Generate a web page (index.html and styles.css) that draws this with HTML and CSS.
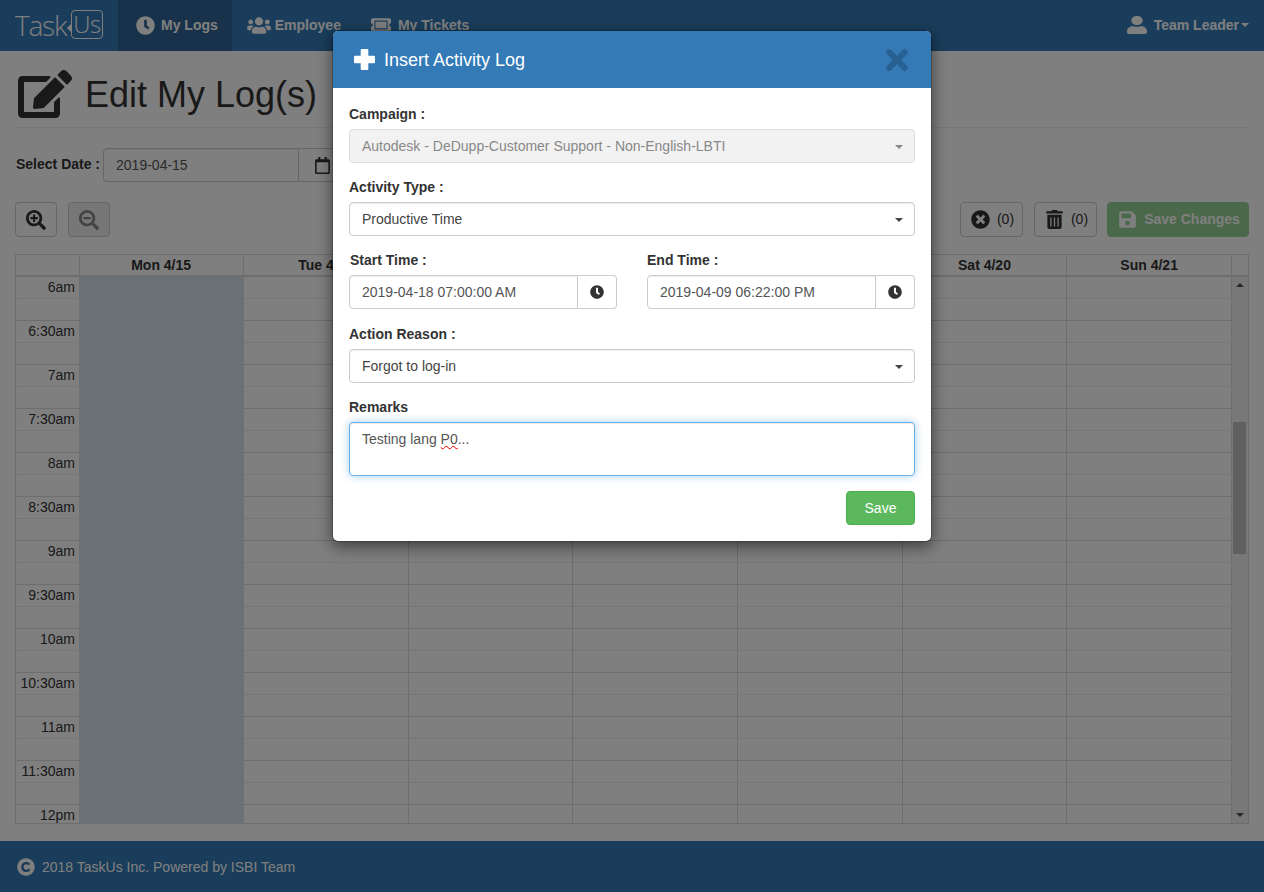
FILE: index.html
```html
<!DOCTYPE html>
<html lang="en">
<head>
  <meta charset="UTF-8">
  <meta name="viewport" content="width=device-width, initial-scale=1.0">
  <link rel="stylesheet" href="styles.css">
  <title>Edit My Log(s)</title>
</head>
<body>

  <svg class="sprite" xmlns="http://www.w3.org/2000/svg">
    <symbol id="i-clock" viewBox="0 0 512 512"><path d="M256,8C119,8,8,119,8,256S119,504,256,504,504,393,504,256,393,8,256,8Zm57.1,350.1L224.9,294c-3.1-2.3-4.9-5.9-4.9-9.7V116c0-6.6,5.4-12,12-12h48c6.6,0,12,5.4,12,12V253.7l63.5,46.2c5.4,3.9,6.5,11.4,2.6,16.8l-28.2,38.8C326.9,360.9,318.5,362,313.1,358.1Z"/></symbol>
    <symbol id="i-users" viewBox="0 0 640 512"><path d="M96 224c35.3 0 64-28.7 64-64s-28.7-64-64-64-64 28.7-64 64 28.7 64 64 64zm448 0c35.3 0 64-28.7 64-64s-28.7-64-64-64-64 28.7-64 64 28.7 64 64 64zm32 32h-64c-17.6 0-33.5 7.1-45.1 18.6 40.3 22.1 68.9 62 75.1 109.4h66c17.7 0 32-14.3 32-32v-32c0-35.3-28.7-64-64-64zm-256 0c61.9 0 112-50.1 112-112S381.9 32 320 32 208 82.1 208 144s50.1 112 112 112zm76.8 32h-8.3c-20.8 10-43.9 16-68.5 16s-47.6-6-68.5-16h-8.3C179.6 288 128 339.6 128 403.2V432c0 26.5 21.5 48 48 48h288c26.5 0 48-21.5 48-48v-28.8c0-63.6-51.6-115.2-115.2-115.2zm-223.7-13.4C161.5 263.1 145.6 256 128 256H64c-35.3 0-64 28.7-64 64v32c0 17.7 14.3 32 32 32h65.9c6.3-47.4 34.9-87.3 75.2-109.4z"/></symbol>
    <symbol id="i-ticket" viewBox="0 0 576 512"><path d="M128 160h320v192H128V160zm400 96c0 26.51 21.49 48 48 48v96c0 26.51-21.49 48-48 48H48c-26.51 0-48-21.49-48-48v-96c26.51 0 48-21.49 48-48s-21.49-48-48-48v-96c0-26.51 21.49-48 48-48h480c26.51 0 48 21.49 48 48v96c-26.51 0-48 21.49-48 48zm-48-104c0-13.255-10.745-24-24-24H120c-13.255 0-24 10.745-24 24v208c0 13.255 10.745 24 24 24h336c13.255 0 24-10.745 24-24V152z"/></symbol>
    <symbol id="i-user" viewBox="0 0 448 512" preserveAspectRatio="none"><path d="M224 256c70.7 0 128-57.3 128-128S294.7 0 224 0 96 57.3 96 128s57.3 128 128 128zm89.6 32h-16.7c-22.2 10.2-46.9 16-72.9 16s-50.6-5.8-72.9-16h-16.7C60.2 288 0 348.2 0 422.4V464c0 26.5 21.5 48 48 48h352c26.5 0 48-21.5 48-48v-41.6c0-74.2-60.2-134.4-134.4-134.4z"/></symbol>
    <symbol id="i-edit" viewBox="0 0 576 512"><path d="M402.6 83.2l90.2 90.2c3.8 3.8 3.8 10 0 13.8L274.4 405.6l-92.8 10.3c-12.4 1.4-22.9-9.1-21.5-21.5l10.3-92.8L388.8 83.2c3.8-3.8 10-3.8 13.8 0zm162-22.9l-48.8-48.8c-15.2-15.2-39.9-15.2-55.2 0l-35.4 35.4c-3.8 3.8-3.8 10 0 13.8l90.2 90.2c3.8 3.8 10 3.8 13.8 0l35.4-35.4c15.2-15.3 15.2-40 0-55.2zM384 346.2V448H64V128h229.8c3.2 0 6.2-1.3 8.5-3.5l40-40c7.6-7.6 2.2-20.5-8.5-20.5H48C21.5 64 0 85.5 0 112v352c0 26.5 21.5 48 48 48h352c26.5 0 48-21.5 48-48V306.2c0-10.7-12.9-16-20.5-8.5l-40 40c-2.2 2.3-3.5 5.3-3.5 8.5z"/></symbol>
    <symbol id="i-calendar" viewBox="0 0 448 512"><path d="M400 64h-48V12c0-6.6-5.4-12-12-12h-40c-6.6 0-12 5.4-12 12v52H160V12c0-6.6-5.4-12-12-12h-40c-6.6 0-12 5.4-12 12v52H48C21.5 64 0 85.5 0 112v352c0 26.5 21.5 48 48 48h352c26.5 0 48-21.5 48-48V112c0-26.5-21.5-48-48-48zm-6 400H54c-3.3 0-6-2.7-6-6V160h352v298c0 3.3-2.7 6-6 6z"/></symbol>
    <symbol id="i-zoom-in" viewBox="0 0 512 512"><path d="M304 192v32c0 6.6-5.4 12-12 12h-56v56c0 6.6-5.4 12-12 12h-32c-6.6 0-12-5.4-12-12v-56h-56c-6.6 0-12-5.4-12-12v-32c0-6.6 5.4-12 12-12h56v-56c0-6.6 5.4-12 12-12h32c6.6 0 12 5.4 12 12v56h56c6.6 0 12 5.4 12 12zm201 284.7L476.7 505c-9.4 9.4-24.6 9.4-33.9 0L343 405.3c-4.5-4.5-7-10.6-7-17V372c-35.3 27.6-79.7 44-128 44C93.1 416 0 322.9 0 208S93.1 0 208 0s208 93.1 208 208c0 48.3-16.4 92.7-44 128h16.3c6.4 0 12.5 2.5 17 7l99.7 99.7c9.3 9.4 9.3 24.6 0 34zM344 208c0-75.2-60.8-136-136-136S72 132.8 72 208s60.8 136 136 136 136-60.8 136-136z"/></symbol>
    <symbol id="i-zoom-out" viewBox="0 0 512 512"><path d="M304 192v32c0 6.6-5.4 12-12 12H124c-6.6 0-12-5.4-12-12v-32c0-6.6 5.4-12 12-12h168c6.6 0 12 5.4 12 12zm201 284.7L476.7 505c-9.4 9.4-24.6 9.4-33.9 0L343 405.3c-4.5-4.5-7-10.6-7-17V372c-35.3 27.6-79.7 44-128 44C93.1 416 0 322.9 0 208S93.1 0 208 0s208 93.1 208 208c0 48.3-16.4 92.7-44 128h16.3c6.4 0 12.5 2.5 17 7l99.7 99.7c9.3 9.4 9.3 24.6 0 34zM344 208c0-75.2-60.8-136-136-136S72 132.8 72 208s60.8 136 136 136 136-60.8 136-136z"/></symbol>
    <symbol id="i-times-circle" viewBox="0 0 512 512"><path d="M256 8C119 8 8 119 8 256s111 248 248 248 248-111 248-248S393 8 256 8zm121.6 313.1c4.7 4.7 4.7 12.3 0 17L338 377.6c-4.7 4.7-12.3 4.7-17 0L256 312l-65.1 65.6c-4.7 4.7-12.3 4.7-17 0L134.4 338c-4.7-4.7-4.7-12.3 0-17l65.6-65-65.6-65.1c-4.7-4.7-4.7-12.3 0-17l39.6-39.6c4.7-4.7 12.3-4.7 17 0l65 65.7 65.1-65.6c4.7-4.7 12.3-4.7 17 0l39.6 39.6c4.7 4.7 4.7 12.3 0 17L312 256l65.6 65.1z"/></symbol>
    <symbol id="i-trash" viewBox="0 0 448 512"><path d="M32 464a48 48 0 0 0 48 48h288a48 48 0 0 0 48-48V128H32zm272-256a16 16 0 0 1 32 0v224a16 16 0 0 1-32 0zm-96 0a16 16 0 0 1 32 0v224a16 16 0 0 1-32 0zm-96 0a16 16 0 0 1 32 0v224a16 16 0 0 1-32 0zM432 32H312l-9.4-18.7A24 24 0 0 0 281.1 0H166.8a23.72 23.72 0 0 0-21.4 13.3L136 32H16A16 16 0 0 0 0 48v32a16 16 0 0 0 16 16h416a16 16 0 0 0 16-16V48a16 16 0 0 0-16-16z"/></symbol>
    <symbol id="i-save" viewBox="0 0 448 512"><path d="M433.941 129.941l-83.882-83.882A48 48 0 0 0 316.118 32H48C21.49 32 0 53.49 0 80v352c0 26.51 21.49 48 48 48h352c26.51 0 48-21.49 48-48V163.882a48 48 0 0 0-14.059-33.941zM224 416c-35.346 0-64-28.654-64-64 0-35.346 28.654-64 64-64s64 28.654 64 64c0 35.346-28.654 64-64 64zm96-304.52V212c0 6.627-5.373 12-12 12H76c-6.627 0-12-5.373-12-12V108c0-6.627 5.373-12 12-12h228.52c3.183 0 6.235 1.264 8.485 3.515l3.48 3.48A11.996 11.996 0 0 1 320 111.48z"/></symbol>
    <symbol id="i-copyright" viewBox="0 0 512 512"><path d="M256 8C119.033 8 8 119.033 8 256s111.033 248 248 248 248-111.033 248-248S392.967 8 256 8zm117.134 346.753c-1.592 1.867-39.776 45.731-109.851 45.731-84.692 0-144.484-63.26-144.484-145.567 0-81.303 62.004-143.401 143.762-143.401 66.957 0 101.965 37.315 103.422 38.904a12 12 0 0 1 1.238 14.623l-22.38 34.655c-4.049 6.267-12.774 7.351-18.234 2.295-.233-.214-26.529-23.88-61.88-23.88-46.116 0-73.916 33.575-73.916 76.082 0 39.602 25.514 79.692 74.277 79.692 38.697 0 65.28-28.338 65.544-28.625 5.132-5.565 14.059-5.033 18.481 1.053l24.547 33.572a12.001 12.001 0 0 1-.526 14.866z"/></symbol>
    <symbol id="i-plus" viewBox="0 0 22 22"><rect x="7" y="0" width="8" height="22" rx="1"/><rect x="0" y="7" width="22" height="8" rx="1"/></symbol>
    <symbol id="i-times" viewBox="0 0 352 512"><path d="M242.72 256l100.07-100.07c12.28-12.28 12.28-32.19 0-44.48l-22.24-22.24c-12.28-12.28-32.19-12.28-44.48 0L176 189.28 75.93 89.21c-12.28-12.28-32.19-12.28-44.48 0L9.21 111.45c-12.28 12.28-12.28 32.19 0 44.48L109.28 256 9.21 356.07c-12.28 12.28-12.28 32.19 0 44.48l22.24 22.24c12.28 12.28 32.2 12.28 44.48 0L176 322.72l100.07 100.07c12.28 12.28 32.2 12.28 44.48 0l22.24-22.24c12.28-12.28 12.28-32.19 0-44.48L242.72 256z"/></symbol>
  </svg>

  <nav class="navbar">
    <a class="brand" href="#">
      <span class="brand-task">Task</span>
      <span class="brand-box">Us</span>
    </a>
    <a class="nav-link active" href="#"><svg class="icon nav-icon"><use href="#i-clock"/></svg>My Logs</a>
    <a class="nav-link" href="#"><svg class="icon nav-icon-wide"><use href="#i-users"/></svg>Employee</a>
    <a class="nav-link" href="#"><svg class="icon nav-icon-ticket"><use href="#i-ticket"/></svg>My Tickets</a>
    <a class="nav-link nav-user" href="#"><svg class="icon nav-icon-user"><use href="#i-user"/></svg>Team Leader<span class="caret"></span></a>
  </nav>

  <main class="content">
    <header class="page-header">
      <svg class="icon page-icon"><use href="#i-edit"/></svg>
      <h1>Edit My Log(s)</h1>
    </header>

    <div class="date-row">
      <label class="date-label">Select Date :</label>
      <div class="input-group date-group">
        <div class="control">2019-04-15</div>
        <span class="addon"><svg class="icon cal-icon"><use href="#i-calendar"/></svg></span>
      </div>
    </div>

    <div class="toolbar">
      <button class="btn btn-icon"><svg class="icon zoom-icon"><use href="#i-zoom-in"/></svg></button>
      <button class="btn btn-icon btn-disabled"><svg class="icon zoom-icon"><use href="#i-zoom-out"/></svg></button>
      <span class="spacer"></span>
      <button class="btn btn-count"><svg class="icon count-icon"><use href="#i-times-circle"/></svg><span class="count">(0)</span></button>
      <button class="btn btn-count"><svg class="icon count-icon"><use href="#i-trash"/></svg><span class="count">(0)</span></button>
      <button class="btn btn-savechanges"><svg class="icon count-icon"><use href="#i-save"/></svg>Save Changes</button>
    </div>

    <section class="calendar">
      <div class="cal-head">
        <div class="cal-axis"></div>
        <div class="cal-day">Mon 4/15</div>
        <div class="cal-day">Tue 4/16</div>
        <div class="cal-day">Wed 4/17</div>
        <div class="cal-day">Thu 4/18</div>
        <div class="cal-day">Fri 4/19</div>
        <div class="cal-day">Sat 4/20</div>
        <div class="cal-day">Sun 4/21</div>
        <div class="cal-gutter"></div>
      </div>
      <div class="cal-body">
        <div class="cal-cols">
          <div class="cal-axis"></div>
          <div class="cal-col today"></div>
          <div class="cal-col"></div>
          <div class="cal-col"></div>
          <div class="cal-col"></div>
          <div class="cal-col"></div>
          <div class="cal-col"></div>
          <div class="cal-col"></div>
          <div class="cal-scrollbar">
            <span class="arrow-up"></span>
            <span class="thumb"></span>
            <span class="arrow-down"></span>
          </div>
        </div>
        <div class="cal-slats">
          <div class="slat minor">6am</div><div class="slat"></div>
          <div class="slat minor">6:30am</div><div class="slat"></div>
          <div class="slat minor">7am</div><div class="slat"></div>
          <div class="slat minor">7:30am</div><div class="slat"></div>
          <div class="slat minor">8am</div><div class="slat"></div>
          <div class="slat minor">8:30am</div><div class="slat"></div>
          <div class="slat minor">9am</div><div class="slat"></div>
          <div class="slat minor">9:30am</div><div class="slat"></div>
          <div class="slat minor">10am</div><div class="slat"></div>
          <div class="slat minor">10:30am</div><div class="slat"></div>
          <div class="slat minor">11am</div><div class="slat"></div>
          <div class="slat minor">11:30am</div><div class="slat"></div>
          <div class="slat minor">12pm</div>
        </div>
      </div>
    </section>
  </main>

  <footer class="footer">
    <svg class="icon footer-icon"><use href="#i-copyright"/></svg>2018 TaskUs Inc. Powered by ISBI Team
  </footer>

  <div class="backdrop"></div>

  <div class="modal">
    <div class="modal-head">
      <svg class="icon plus-icon"><use href="#i-plus"/></svg>
      <h4>Insert Activity Log</h4>
      <svg class="icon close-icon"><use href="#i-times"/></svg>
    </div>
    <div class="modal-body">
      <div class="form-group">
        <label>Campaign :</label>
        <div class="control select disabled">Autodesk - DeDupp-Customer Support - Non-English-LBTI<span class="caret"></span></div>
      </div>
      <div class="form-group">
        <label>Activity Type :</label>
        <div class="control select">Productive Time<span class="caret"></span></div>
      </div>
      <div class="form-row">
        <div class="form-group">
          <label class="label-inset">Start Time :</label>
          <div class="input-group">
            <div class="control">2019-04-18 07:00:00 AM</div>
            <span class="addon"><svg class="icon addon-icon"><use href="#i-clock"/></svg></span>
          </div>
        </div>
        <div class="form-group">
          <label>End Time :</label>
          <div class="input-group">
            <div class="control">2019-04-09 06:22:00 PM</div>
            <span class="addon"><svg class="icon addon-icon"><use href="#i-clock"/></svg></span>
          </div>
        </div>
      </div>
      <div class="form-group">
        <label>Action Reason :</label>
        <div class="control select">Forgot to log-in<span class="caret"></span></div>
      </div>
      <div class="form-group">
        <label>Remarks</label>
        <div class="control textarea">Testing lang <span class="misspelled">P0</span>...</div>
      </div>
      <div class="modal-actions">
        <button class="btn btn-save">Save</button>
      </div>
    </div>
  </div>

</body>
</html>
```

FILE: styles.css
```css
* {
  box-sizing: border-box;
}

html, body {
  height: 100%;
}

body {
  font-family: "Liberation Sans", Arial, sans-serif;
  font-size: 14px;
  line-height: 20px;
  color: #333;
  background-color: #fff;
  margin: 0;
  height: 892px;
  overflow: hidden;
  display: flex;
  flex-direction: column;
}

.sprite {
  display: none;
}

.icon {
  display: block;
  fill: currentColor;
  flex: none;
}

/* navbar */
.navbar {
  height: 51px;
  background-color: #337ab7;
  display: flex;
  align-items: stretch;
  flex: none;
}

.brand {
  width: 118px;
  padding: 10px 0 0 15px;
  display: flex;
  align-items: flex-start;
  color: #fff;
  text-decoration: none;
}

.brand-task {
  width: 50px;
  font-family: "Open Sans", sans-serif;
  font-weight: 300;
  font-size: 28px;
  line-height: 30px;
  letter-spacing: -1.2px;
}

.brand-box {
  position: relative;
  margin-left: 6px;
  width: 32px;
  height: 29px;
  border: 1.5px solid #fff;
  border-radius: 4px;
  font-family: "Open Sans", sans-serif;
  font-weight: 300;
  font-size: 24px;
  line-height: 26px;
  letter-spacing: -0.5px;
  text-align: center;
}

.brand-box::before {
  content: "";
  position: absolute;
  left: -5px;
  top: 13px;
  width: 0;
  height: 0;
  border-top: 4px solid transparent;
  border-bottom: 4px solid transparent;
  border-right: 4px solid #fff;
}

.nav-link {
  display: flex;
  align-items: center;
  padding: 0 15px 1px;
  color: #fff;
  font-weight: bold;
  text-decoration: none;
}

.nav-link.active {
  background-color: #2e6595;
  padding-left: 18px;
  padding-right: 14px;
}

.nav-icon {
  width: 19px;
  height: 19px;
  margin-right: 6px;
}

.nav-icon-wide {
  width: 24px;
  height: 19px;
  margin-right: 4px;
}

.nav-icon-ticket {
  width: 20px;
  height: 18px;
  margin-right: 7px;
}

.nav-user {
  margin-left: auto;
}

.nav-icon-user {
  width: 20px;
  height: 18px;
  margin-right: 7px;
}

.caret {
  display: inline-block;
  width: 0;
  height: 0;
  margin-left: 2px;
  border-top: 4px solid;
  border-left: 4px solid transparent;
  border-right: 4px solid transparent;
}

/* page */
.content {
  flex: 1;
  padding: 0 15px;
  min-height: 0;
}

.page-header {
  height: 77px;
  margin-bottom: 20px;
  padding: 19px 0 0 3px;
  display: flex;
  align-items: flex-start;
  border-bottom: 1px solid #eee;
}

.page-icon {
  width: 54px;
  height: 48px;
  margin-right: 13px;
  color: #333;
}

.page-header h1 {
  margin: 5px 0 0;
  font-size: 36px;
  line-height: 40px;
  font-weight: 500;
}

.date-row {
  display: flex;
  align-items: center;
  height: 34px;
  margin-bottom: 20px;
}

.date-label {
  font-weight: bold;
  margin: 0 3px 2px 1px;
}

.cal-icon {
  width: 15px;
  height: 17px;
  color: #333;
}

.toolbar {
  display: flex;
  align-items: flex-start;
  height: 35px;
  gap: 11px;
  margin-bottom: 17px;
}

.spacer {
  flex: 1;
}

.btn {
  display: flex;
  align-items: center;
  justify-content: center;
  height: 35px;
  border: 1px solid #ccc;
  border-radius: 4px;
  background-color: #fff;
  color: #333;
  font: inherit;
  padding: 0;
}

.btn-icon {
  width: 42px;
}

.btn-disabled {
  background-color: #eee;
  color: #888;
}

.zoom-icon {
  width: 20px;
  height: 20px;
}

.btn-count {
  width: 63px;
  padding: 0 0 1px 2px;
}

.count-icon {
  width: 19px;
  height: 19px;
  margin-right: 7px;
}

.count {
  color: #333;
}

.btn-savechanges {
  width: 142px;
  margin-left: -1px;
  padding: 0 0 1px 2px;
  background-color: #5cb85c;
  border-color: #5cb85c;
  color: #fff;
  font-weight: bold;
  opacity: 0.65;
}

/* calendar */
.calendar {
  height: 570px;
  border: 1px solid #ddd;
  display: flex;
  flex-direction: column;
}

.cal-head {
  display: flex;
  height: 22px;
  border-bottom: 2px solid #ddd;
  flex: none;
}

.cal-axis {
  width: 63.6px;
  margin-right: -0.3px;
  flex: none;
  border-right: 1px solid #ddd;
}

.cal-day {
  flex: 1;
  border-right: 1px solid #ddd;
  text-align: center;
  font-weight: bold;
  line-height: 21px;
}

.cal-gutter {
  width: 16px;
  flex: none;
}

.cal-body {
  position: relative;
  flex: 1;
  min-height: 0;
  overflow: hidden;
}

.cal-cols {
  display: flex;
  height: 100%;
}

.cal-col {
  flex: 1;
  border-right: 1px solid #ddd;
}

.cal-col.today {
  background-color: #d4e4f0;
}

.cal-col:nth-last-child(2) {
  border-right: none;
}

.cal-scrollbar {
  width: 17px;
  flex: none;
  background-color: #f1f1f1;
  border-left: 1px solid #ddd;
  position: relative;
}

.thumb {
  position: absolute;
  left: 1px;
  right: 2px;
  top: 145px;
  height: 132px;
  background-color: #c1c1c1;
}

.arrow-up,
.arrow-down {
  position: absolute;
  left: 4px;
  width: 0;
  height: 0;
  border-left: 4px solid transparent;
  border-right: 4px solid transparent;
}

.arrow-up {
  top: 6px;
  border-bottom: 4px solid #505050;
}

.arrow-down {
  bottom: 6px;
  border-top: 4px solid #505050;
}

.cal-slats {
  position: absolute;
  left: 0;
  top: 0;
  right: 17px;
}

.slat {
  height: 22px;
  padding-right: 5px;
  width: 64px;
  white-space: nowrap;
  text-align: right;
  line-height: 21px;
  position: relative;
}

.slat::after {
  content: "";
  position: absolute;
  left: 0;
  top: 21px;
  width: 1216px;
  border-bottom: 1px solid #ddd;
}

.slat.minor::after {
  border-bottom: 1px dotted #ddd;
}

/* footer */
.footer {
  height: 51px;
  flex: none;
  background-color: #337ab7;
  color: #fff;
  display: flex;
  align-items: center;
  padding-left: 17px;
}

.footer-icon {
  width: 18px;
  height: 18px;
  margin-right: 7px;
}

/* modal */
.backdrop {
  position: absolute;
  inset: 0;
  background-color: #000;
  opacity: 0.5;
}

.modal {
  position: absolute;
  left: 332px;
  top: 30px;
  width: 600px;
  height: 512px;
  background-color: #fff;
  border: 1px solid rgba(0, 0, 0, 0.2);
  border-radius: 6px;
  box-shadow: 0 5px 15px rgba(0, 0, 0, 0.5);
  background-clip: padding-box;
}

.modal-head {
  height: 57px;
  background-color: #337ab7;
  color: #fff;
  border-radius: 5px 5px 0 0;
  display: flex;
  align-items: center;
  padding: 0 23px 0 21px;
}

.plus-icon {
  width: 21px;
  height: 21px;
  margin-right: 9px;
}

.modal-head h4 {
  margin: 0;
  font-size: 18px;
  font-weight: 500;
  line-height: 20px;
  flex: 1;
}

.close-icon {
  width: 22px;
  height: 32px;
  color: #000;
  opacity: 0.2;
}

.modal-body {
  padding: 16px 16px 0;
}

.form-group {
  margin-bottom: 14px;
}

.form-group label {
  display: block;
  font-weight: bold;
  height: 20px;
  margin-bottom: 5px;
}

.form-group .label-inset {
  padding-left: 1px;
}

.form-row {
  display: grid;
  grid-template-columns: 268px 268px;
  column-gap: 30px;
  margin-bottom: 15px;
}

.form-row .form-group {
  margin-bottom: 0;
}

.control {
  height: 34px;
  padding: 6px 12px;
  color: #555;
  background-color: #fff;
  border: 1px solid #ccc;
  border-radius: 4px;
  box-shadow: inset 0 1px 1px rgba(0, 0, 0, 0.075);
}

.select {
  position: relative;
  color: #444;
}

.select .caret {
  position: absolute;
  right: 11px;
  top: 15px;
  color: #444;
}

.select.disabled {
  background-color: #f2f2f2;
  border-color: #ddd;
  color: #888;
  box-shadow: none;
}

.select.disabled .caret {
  color: #888;
}

.input-group {
  display: flex;
}

.input-group .control {
  flex: 1;
  min-width: 0;
  border-radius: 4px 0 0 4px;
}

.addon {
  display: flex;
  align-items: center;
  justify-content: center;
  width: 39px;
  flex: none;
  border: 1px solid #ccc;
  border-left: 0;
  border-radius: 0 4px 4px 0;
}

.addon-icon {
  width: 14px;
  height: 14px;
  color: #333;
}

.date-group {
  width: 244px;
}

.date-group .control {
  width: 196px;
  flex: none;
}

.date-group .addon {
  width: 48px;
}

.textarea {
  height: 54px;
  border-color: #66afe9;
  box-shadow: inset 0 1px 1px rgba(0, 0, 0, 0.075), 0 0 8px rgba(102, 175, 233, 0.6);
}

.misspelled {
  text-decoration: underline wavy #e00;
  text-decoration-thickness: 1px;
}

.modal-actions {
  display: flex;
  justify-content: flex-end;
  margin-top: 15px;
}

.btn-save {
  width: 69px;
  height: 34px;
  background-color: #5cb85c;
  border-color: #4cae4c;
  color: #fff;
}
```
